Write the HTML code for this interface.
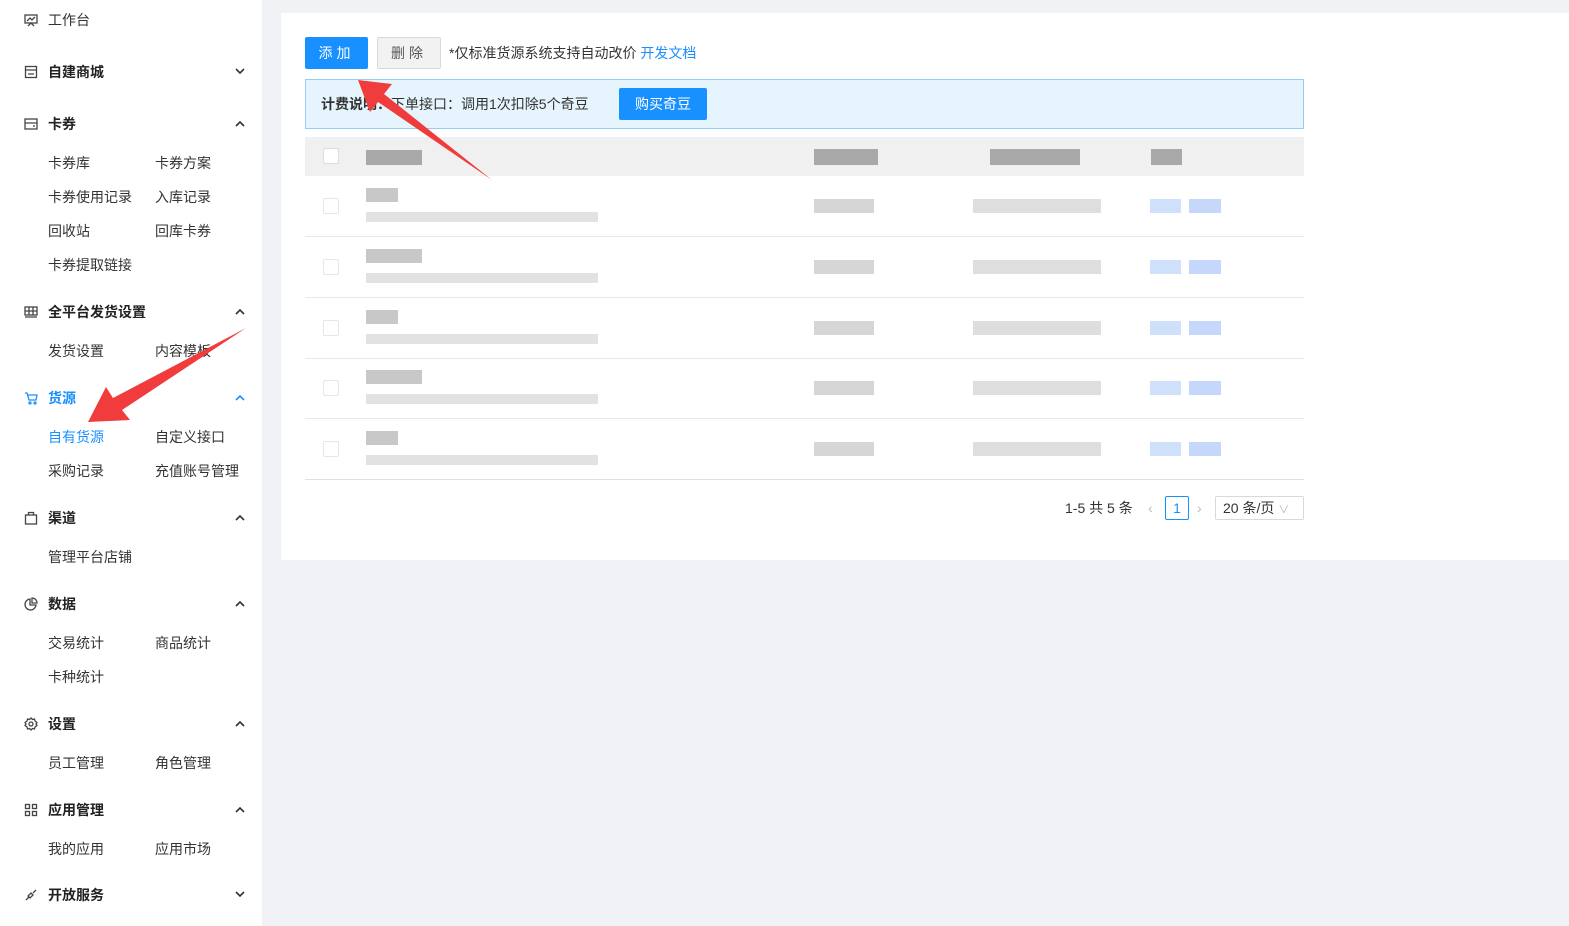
<!DOCTYPE html>
<html><head><meta charset="utf-8"><style>
*{margin:0;padding:0;box-sizing:border-box}
body{width:1569px;height:926px;background:#f0f2f5;font-family:"Liberation Sans","Noto Sans CJK SC",sans-serif;font-size:14px;color:#333;position:relative;overflow:hidden}
.a{position:absolute;white-space:nowrap;line-height:20px}
#side .a{margin-top:1px}
#side{position:absolute;left:0;top:0;width:262px;height:926px;background:#fff}
.h{font-weight:bold;color:#222}
.ic{position:absolute;width:14px;height:14px}
.car{position:absolute;left:235px;width:10px;height:10px}
.g{position:absolute;background:#d6d6d6}
.gb{position:absolute;background:#cfe0fb}
</style></head><body>
<div id="side">
<svg class="ic" style="left:24px;top:13px" viewBox="0 0 14 14" fill="none" stroke="#444" stroke-width="1.3"><rect x="1" y="2" width="12" height="8"/><path d="M3 8l3-3 2 2 3-3M4 13l3-3 3 3"/></svg>
<div class="a" style="left:48px;top:9px">工作台</div>
<svg class="ic" style="left:24px;top:65px" viewBox="0 0 14 14" fill="none" stroke="#444" stroke-width="1.3"><rect x="1.5" y="1.5" width="11" height="11"/><path d="M1.5 5h11M4 9h6"/></svg>
<div class="a h" style="left:48px;top:61px">自建商城</div>
<svg class="car" style="top:66px" viewBox="0 0 10 10"><path d="M1 3l4 4 4-4" fill="none" stroke="#333" stroke-width="1.6"/></svg>
<svg class="ic" style="left:24px;top:117px" viewBox="0 0 14 14" fill="none" stroke="#444" stroke-width="1.3"><rect x="1" y="2" width="12" height="10"/><path d="M1 6h12M9 9h2"/></svg>
<div class="a h" style="left:48px;top:113px">卡券</div>
<svg class="car" style="top:119px" viewBox="0 0 10 10"><path d="M1 7l4-4 4 4" fill="none" stroke="#333" stroke-width="1.6"/></svg>
<div class="a" style="left:48px;top:152px">卡券库</div><div class="a" style="left:155px;top:152px">卡券方案</div>
<div class="a" style="left:48px;top:186px">卡券使用记录</div><div class="a" style="left:155px;top:186px">入库记录</div>
<div class="a" style="left:48px;top:220px">回收站</div><div class="a" style="left:155px;top:220px">回库卡券</div>
<div class="a" style="left:48px;top:254px">卡券提取链接</div>
<svg class="ic" style="left:24px;top:305px" viewBox="0 0 14 14" fill="none" stroke="#444" stroke-width="1.3"><rect x="1" y="2" width="12" height="8"/><path d="M1 6h12M5 2v8M9 2v8M1 12h12"/></svg>
<div class="a h" style="left:48px;top:301px">全平台发货设置</div>
<svg class="car" style="top:307px" viewBox="0 0 10 10"><path d="M1 7l4-4 4 4" fill="none" stroke="#333" stroke-width="1.6"/></svg>
<div class="a" style="left:48px;top:340px">发货设置</div><div class="a" style="left:155px;top:340px">内容模板</div>
<svg class="ic" style="left:24px;top:391px" viewBox="0 0 14 14" fill="none" stroke="#1890ff" stroke-width="1.3"><path d="M1 2h2l2 7h7l1-5H4"/><circle cx="6" cy="12" r="1"/><circle cx="11" cy="12" r="1"/></svg>
<div class="a h" style="left:48px;top:387px;color:#1890ff">货源</div>
<svg class="car" style="top:393px" viewBox="0 0 10 10"><path d="M1 7l4-4 4 4" fill="none" stroke="#1890ff" stroke-width="1.6"/></svg>
<div class="a" style="left:48px;top:426px;color:#1890ff">自有货源</div><div class="a" style="left:155px;top:426px">自定义接口</div>
<div class="a" style="left:48px;top:460px">采购记录</div><div class="a" style="left:155px;top:460px">充值账号管理</div>
<svg class="ic" style="left:24px;top:511px" viewBox="0 0 14 14" fill="none" stroke="#444" stroke-width="1.3"><rect x="1.5" y="4" width="11" height="9"/><path d="M4.5 4V1.5h5V4"/></svg>
<div class="a h" style="left:48px;top:507px">渠道</div>
<svg class="car" style="top:513px" viewBox="0 0 10 10"><path d="M1 7l4-4 4 4" fill="none" stroke="#333" stroke-width="1.6"/></svg>
<div class="a" style="left:48px;top:546px">管理平台店铺</div>
<svg class="ic" style="left:24px;top:597px" viewBox="0 0 14 14" fill="none" stroke="#444" stroke-width="1.3"><path d="M6 2a5.5 5.5 0 1 0 6 6H6z"/><path d="M8 1v5h5a5 5 0 0 0-5-5z"/></svg>
<div class="a h" style="left:48px;top:593px">数据</div>
<svg class="car" style="top:599px" viewBox="0 0 10 10"><path d="M1 7l4-4 4 4" fill="none" stroke="#333" stroke-width="1.6"/></svg>
<div class="a" style="left:48px;top:632px">交易统计</div><div class="a" style="left:155px;top:632px">商品统计</div>
<div class="a" style="left:48px;top:666px">卡种统计</div>
<svg class="ic" style="left:24px;top:717px" viewBox="0 0 14 14" fill="none" stroke="#444" stroke-width="1.3"><circle cx="7" cy="7" r="2"/><path d="M7 1l1.5 1.5 2-.5.5 2L13 5.5 12 7l1 1.5-2 1.5-.5 2-2-.5L7 13l-1.5-1.5-2 .5-.5-2L1 8.5 2 7 1 5.5 3 4l.5-2 2 .5z"/></svg>
<div class="a h" style="left:48px;top:713px">设置</div>
<svg class="car" style="top:719px" viewBox="0 0 10 10"><path d="M1 7l4-4 4 4" fill="none" stroke="#333" stroke-width="1.6"/></svg>
<div class="a" style="left:48px;top:752px">员工管理</div><div class="a" style="left:155px;top:752px">角色管理</div>
<svg class="ic" style="left:24px;top:803px" viewBox="0 0 14 14" fill="none" stroke="#444" stroke-width="1.3"><rect x="1.5" y="1.5" width="4" height="4"/><rect x="8.5" y="1.5" width="4" height="4"/><rect x="1.5" y="8.5" width="4" height="4"/><rect x="8.5" y="8.5" width="4" height="4"/></svg>
<div class="a h" style="left:48px;top:799px">应用管理</div>
<svg class="car" style="top:805px" viewBox="0 0 10 10"><path d="M1 7l4-4 4 4" fill="none" stroke="#333" stroke-width="1.6"/></svg>
<div class="a" style="left:48px;top:838px">我的应用</div><div class="a" style="left:155px;top:838px">应用市场</div>
<svg class="ic" style="left:24px;top:888px" viewBox="0 0 14 14" fill="none" stroke="#444" stroke-width="1.3"><path d="M2 12l3-3M9 5l3-3M4 8l2 2 3-3-2-2zM7 5l2 2"/></svg>
<div class="a h" style="left:48px;top:884px">开放服务</div>
<svg class="car" style="top:889px" viewBox="0 0 10 10"><path d="M1 3l4 4 4-4" fill="none" stroke="#333" stroke-width="1.6"/></svg>
</div>

<div style="position:absolute;left:281px;top:13px;width:1288px;height:547px;background:#fff"></div>
<div class="a" style="left:305px;top:37px;width:63px;height:32px;line-height:32px;background:#1890ff;color:#fff;text-align:center;border-radius:2px;letter-spacing:4px">添加</div>
<div class="a" style="left:377px;top:37px;width:64px;height:32px;line-height:30px;background:#f2f2f2;border:1px solid #d9d9d9;color:#555;text-align:center;border-radius:2px;letter-spacing:4px">删除</div>
<div class="a" style="left:449px;top:43px">*仅标准货源系统支持自动改价 <span style="color:#1890ff">开发文档</span></div>
<div style="position:absolute;left:305px;top:79px;width:999px;height:50px;background:#e6f4fe;border:1px solid #91cdf8"></div>
<div class="a" style="left:321px;top:94px"><b>计费说明：</b>下单接口：调用1次扣除5个奇豆</div>
<div class="a" style="left:619px;top:88px;width:88px;height:32px;line-height:32px;background:#1890ff;color:#fff;text-align:center;border-radius:2px">购买奇豆</div>

<div style="position:absolute;left:305px;top:137px;width:999px;height:39px;background:#f0f0f0"></div>
<div style="position:absolute;left:323px;top:148px;width:16px;height:16px;border:1px solid #ddd;background:#fff;border-radius:2px"></div>
<div class="g" style="left:366px;top:150px;width:56px;height:15px;background:#a8a8a8"></div>
<div class="g" style="left:814px;top:149px;width:64px;height:16px;background:#a8a8a8"></div>
<div class="g" style="left:990px;top:149px;width:90px;height:16px;background:#a8a8a8"></div>
<div class="g" style="left:1151px;top:149px;width:31px;height:16px;background:#a8a8a8"></div>

<div id="rows"></div>
<script>
var ys=[176,237,298,358,419],h='';
ys.forEach(function(y,i){
 var c=y+30;
 h+='<div style="position:absolute;left:305px;top:'+(y+60)+'px;width:999px;height:1px;background:#e8e8e8"></div>';
 h+='<div style="position:absolute;left:323px;top:'+(c-8)+'px;width:16px;height:16px;border:1px solid #e6e6e6;border-radius:2px"></div>';
 h+='<div class="g" style="left:366px;top:'+(c-18)+'px;width:'+(i%2?56:32)+'px;height:14px;background:#c8c8c8"></div>';
 h+='<div class="g" style="left:366px;top:'+(c+6)+'px;width:232px;height:10px;background:#e2e2e2"></div>';
 h+='<div class="g" style="left:814px;top:'+(c-7)+'px;width:60px;height:14px"></div>';
 h+='<div class="g" style="left:973px;top:'+(c-7)+'px;width:128px;height:14px;background:#dedede"></div>';
 h+='<div class="gb" style="left:1150px;top:'+(c-7)+'px;width:31px;height:14px"></div>';
 h+='<div class="gb" style="left:1189px;top:'+(c-7)+'px;width:32px;height:14px;background:#c5d8fb"></div>';
});
document.getElementById('rows').innerHTML=h;
</script>
<div style="position:absolute;left:305px;top:479px;width:999px;height:1px;background:#e0e0e0"></div>
<div class="a" style="left:1065px;top:498px">1-5 共 5 条</div>
<div class="a" style="left:1148px;top:498px;color:#bbb">‹</div>
<div class="a" style="left:1165px;top:496px;width:24px;height:24px;line-height:22px;border:1px solid #1890ff;color:#1890ff;text-align:center;border-radius:2px">1</div>
<div class="a" style="left:1197px;top:498px;color:#bbb">›</div>
<div class="a" style="left:1215px;top:496px;width:89px;height:24px;line-height:22px;border:1px solid #d9d9d9;padding-left:7px;border-radius:2px">20 条/页 <span style="color:#bbb;font-size:11px">∨</span></div>

<svg style="position:absolute;left:0;top:0" width="1569" height="926">
<polygon points="358,80 392,84 384,94 492,180 378,102 370,112" fill="#f03c3c"/>
<polygon points="88,422 106,387 113,398 246,328 122,410 130,420" fill="#f03c3c"/>
</svg>
</body></html>
